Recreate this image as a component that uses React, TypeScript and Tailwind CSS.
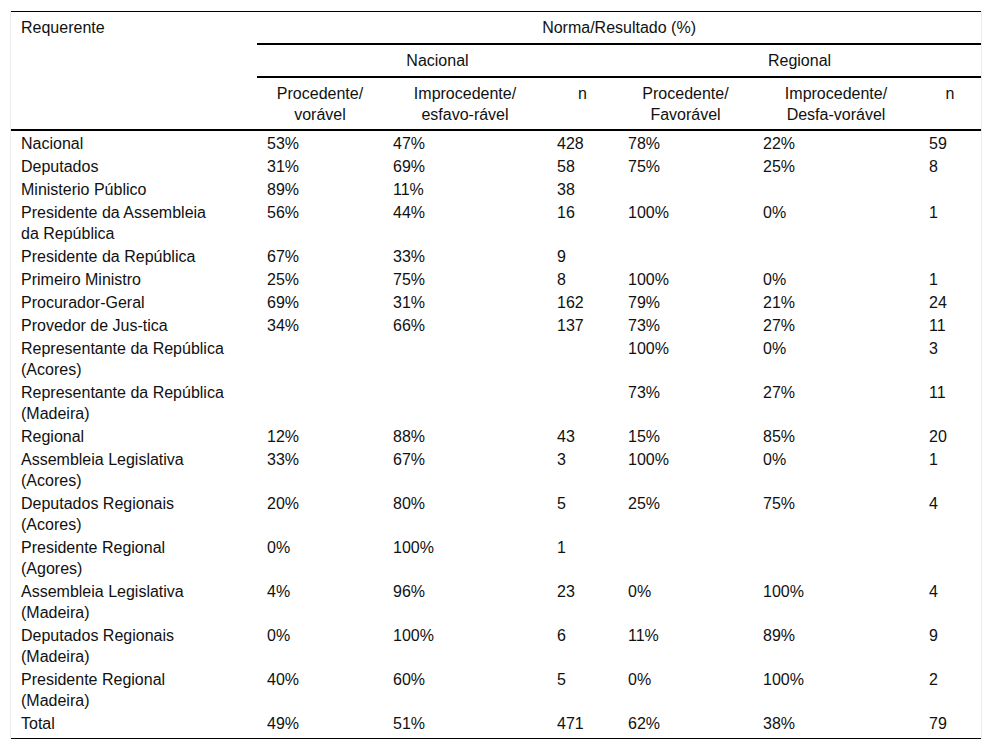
type Row = {
  name: string;
  nat?: [string, string, string];
  reg?: [string, string, string];
};

const rows: Row[] = [
  { name: "Nacional", nat: ["53%", "47%", "428"], reg: ["78%", "22%", "59"] },
  { name: "Deputados", nat: ["31%", "69%", "58"], reg: ["75%", "25%", "8"] },
  { name: "Ministerio Público", nat: ["89%", "11%", "38"] },
  { name: "Presidente da Assembleia\nda República", nat: ["56%", "44%", "16"], reg: ["100%", "0%", "1"] },
  { name: "Presidente da República", nat: ["67%", "33%", "9"] },
  { name: "Primeiro Ministro", nat: ["25%", "75%", "8"], reg: ["100%", "0%", "1"] },
  { name: "Procurador-Geral", nat: ["69%", "31%", "162"], reg: ["79%", "21%", "24"] },
  { name: "Provedor de Jus-tica", nat: ["34%", "66%", "137"], reg: ["73%", "27%", "11"] },
  { name: "Representante da República\n(Acores)", reg: ["100%", "0%", "3"] },
  { name: "Representante da República\n(Madeira)", reg: ["73%", "27%", "11"] },
  { name: "Regional", nat: ["12%", "88%", "43"], reg: ["15%", "85%", "20"] },
  { name: "Assembleia Legislativa\n(Acores)", nat: ["33%", "67%", "3"], reg: ["100%", "0%", "1"] },
  { name: "Deputados Regionais\n(Acores)", nat: ["20%", "80%", "5"], reg: ["25%", "75%", "4"] },
  { name: "Presidente Regional\n(Agores)", nat: ["0%", "100%", "1"] },
  { name: "Assembleia Legislativa\n(Madeira)", nat: ["4%", "96%", "23"], reg: ["0%", "100%", "4"] },
  { name: "Deputados Regionais\n(Madeira)", nat: ["0%", "100%", "6"], reg: ["11%", "89%", "9"] },
  { name: "Presidente Regional\n(Madeira)", nat: ["40%", "60%", "5"], reg: ["0%", "100%", "2"] },
  { name: "Total", nat: ["49%", "51%", "471"], reg: ["62%", "38%", "79"] },
];

export default function App() {
  return (
    <div className="min-h-screen bg-white pt-[11px] text-[16px] leading-[21px] text-[#111]" style={{ fontFamily: '"Liberation Sans", Arial, sans-serif' }}>
      <div className="ml-[10px] w-[972px] border-x border-[#ececec]">
        <table className="w-[970px] table-fixed border-separate border-spacing-0 border-y border-black">
          <colgroup>
            <col className="w-[246px]" />
            <col className="w-[126px]" />
            <col className="w-[164px]" />
            <col className="w-[71px]" />
            <col className="w-[135px]" />
            <col className="w-[166px]" />
            <col className="w-[62px]" />
          </colgroup>
          <thead>
            <tr>
              <th rowSpan={3} className="border-b-2 border-black px-[10px] pt-[5px] text-left align-top font-normal">Requerente</th>
              <th colSpan={6} className="border-b-2 border-black pt-[5px] pb-[5px] text-center font-normal">Norma/Resultado (%)</th>
            </tr>
            <tr>
              <th colSpan={3} className="border-b-2 border-black pt-[5px] pb-[5px] text-center font-normal">Nacional</th>
              <th colSpan={3} className="border-b-2 border-black pt-[5px] pb-[5px] text-center font-normal">Regional</th>
            </tr>
            <tr>
              {["Procedente/\nvorável", "Improcedente/\nesfavo-rável", "n", "Procedente/\nFavorável", "Improcedente/\nDesfa-vorável", "n"].map((h, i) => (
                <th key={i} className="border-b-2 border-black pt-[5px] pb-[4px] text-center align-top font-normal whitespace-pre-line">{h}</th>
              ))}
            </tr>
          </thead>
          <tbody>
            {rows.map((r, i) => {
              const last = i === rows.length - 1;
              const cells = [...(r.nat || ["", "", ""]), ...(r.reg || ["", "", ""])];
              return (
                <tr key={i}>
                  <td className={`whitespace-pre-line px-[10px] pt-[2px] align-top ${last ? "pb-[4px]" : "pb-0"}`}>{r.name}</td>
                  {cells.map((c, j) => (
                    <td key={j} className={`pl-[10px] pt-[2px] align-top ${last ? "pb-[4px]" : "pb-0"}`}>{c}</td>
                  ))}
                </tr>
              );
            })}
          </tbody>
        </table>
      </div>
    </div>
  );
}
